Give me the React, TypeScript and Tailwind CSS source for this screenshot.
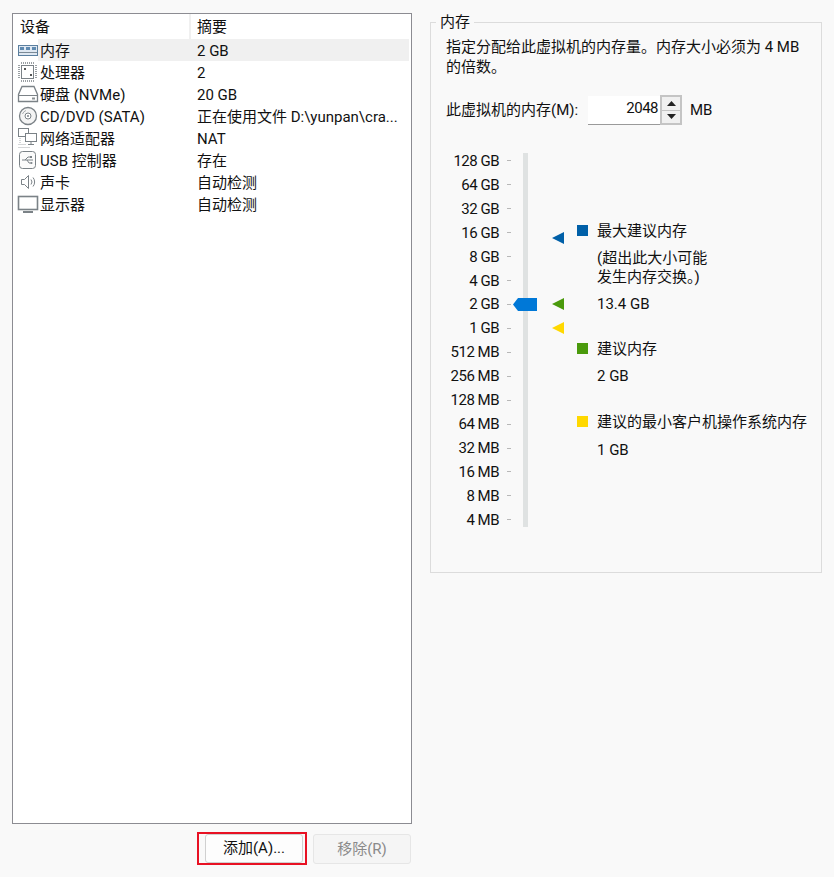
import React from 'react';

const FONT = 'Roboto, "Noto Sans CJK SC", sans-serif';

const devices = [
  { icon: 'memory', name: '内存', summary: '2 GB' },
  { icon: 'cpu', name: '处理器', summary: '2' },
  { icon: 'disk', name: '硬盘 (NVMe)', summary: '20 GB' },
  { icon: 'cd', name: 'CD/DVD (SATA)', summary: '正在使用文件 D:\\yunpan\\cra...' },
  { icon: 'net', name: '网络适配器', summary: 'NAT' },
  { icon: 'usb', name: 'USB 控制器', summary: '存在' },
  { icon: 'sound', name: '声卡', summary: '自动检测' },
  { icon: 'display', name: '显示器', summary: '自动检测' },
];

const scale = [
  '128 GB', '64 GB', '32 GB', '16 GB', '8 GB', '4 GB', '2 GB', '1 GB',
  '512 MB', '256 MB', '128 MB', '64 MB', '32 MB', '16 MB', '8 MB', '4 MB',
];

function DeviceIcon({ name }: { name: string }) {
  const c = '#7b8287';
  return (
    <svg width="22" height="22" viewBox="0 0 22 22" fill="none" className="shrink-0">
      {name === 'memory' && (
        <g>
          <rect x="1.5" y="6.5" width="19" height="10" fill="#dfe8f2" stroke="#5b7f9f" />
          <rect x="3" y="8" width="4" height="3" fill="#5f8ab0" />
          <rect x="9" y="8" width="4" height="3" fill="#5f8ab0" />
          <rect x="15" y="8" width="4" height="3" fill="#5f8ab0" />
          <path d="M2 13.5h18" stroke="#7b8a96" />
        </g>
      )}
      {name === 'cpu' && (
        <g>
          <rect x="4.5" y="4.5" width="12" height="13" fill="#fff" stroke={c} />
          <path d="M4 2h14M4 20h14M2 4v14M19 4v14" stroke="#9a9fa3" strokeDasharray="1 1" strokeWidth="2" />
          <rect x="7" y="7" width="2" height="2" fill="#555" />
          <rect x="13" y="13" width="2" height="2" fill="#555" />
        </g>
      )}
      {name === 'disk' && (
        <g>
          <path d="M5 3.5h12l3.5 8v7h-19v-7z" fill="#fff" stroke={c} strokeWidth="1.3" />
          <path d="M2 12.5h18" stroke={c} />
          <rect x="15" y="14.5" width="3" height="2" fill="#8b9194" />
        </g>
      )}
      {name === 'cd' && (
        <g>
          <circle cx="11" cy="11" r="8.5" fill="#f4f4f4" stroke={c} strokeWidth="1.3" />
          <circle cx="11" cy="11" r="3" fill="#fff" stroke={c} />
          <circle cx="11" cy="11" r="1" fill={c} />
          <path d="M5.5 9a6 6 0 0 1 3.5-3.5" stroke="#a9adb0" />
        </g>
      )}
      {name === 'net' && (
        <g>
          <rect x="1.5" y="1.5" width="10" height="8" fill="#fff" stroke={c} />
          <rect x="8.5" y="6.5" width="11" height="8" fill="#fff" stroke={c} />
          <path d="M14 14.5v3M11 17.5h6" stroke={c} />
          <path d="M1.5 17.5h8M1.5 20.5h12M3 11v6" stroke="#a8adb0" strokeDasharray="1 1" />
        </g>
      )}
      {name === 'usb' && (
        <g>
          <rect x="2.5" y="2.5" width="16" height="17" rx="3" fill="#fbfbfb" stroke={c} />
          <path d="M5 11h11M8 11l3-3h2M10 11l2 3h2" stroke={c} />
          <rect x="13" y="7" width="2" height="2" fill={c} />
          <circle cx="14.5" cy="14" r="1" fill={c} />
        </g>
      )}
      {name === 'sound' && (
        <g>
          <path d="M4.5 8.5h3l4-4v13l-4-4h-3z" fill="#fff" stroke={c} />
          <path d="M14 8.5a4 4 0 0 1 0 5M16 6.5a7 7 0 0 1 0 9" stroke={c} />
        </g>
      )}
      {name === 'display' && (
        <g>
          <rect x="1.5" y="3.5" width="19" height="13" fill="#fff" stroke={c} strokeWidth="1.6" />
          <path d="M6 19h10" stroke={c} strokeWidth="2" />
        </g>
      )}
    </svg>
  );
}

function Triangle({ color, className }: { color: string; className: string }) {
  return (
    <svg width="12" height="12" viewBox="0 0 12 12" className={`absolute left-[552px] ${className}`}>
      <polygon points="0,6 12,0 12,12" fill={color} />
    </svg>
  );
}

function Legend({ color, title, className, children }: { color: string; title: string; className?: string; children: React.ReactNode }) {
  return (
    <div className={`flex ${className ?? ''}`}>
      <div className="w-[11px] h-[11px] mt-[5px] mr-[9px] shrink-0" style={{ background: color }} />
      <div>
        <div className="leading-[22px] whitespace-nowrap">{title}</div>
        {children}
      </div>
    </div>
  );
}

export default function App() {
  return (
    <div className="relative w-[834px] h-[877px] bg-[#f9f9f9] text-[15px] text-[#111] flex overflow-hidden" style={{ fontFamily: FONT }}>
      {/* Device list */}
      <div className="w-[400px] ml-[12px] mt-[13px] flex flex-col">
        <div className="h-[811px] bg-white border border-[#8c8c92]">
          <div className="flex h-[25px] leading-[27px]">
            <div className="w-[178px] pl-[7px] border-r-2 border-[#f0f0f0]">设备</div>
            <div className="pl-[6px]">摘要</div>
          </div>
          {devices.map((d, i) => (
            <div key={d.name} className="flex h-[22px] leading-[22px] relative">
              <div className="w-[177px] flex items-center pl-[4px]">
                <DeviceIcon name={d.icon} />
                <span className={`pl-px pt-px whitespace-nowrap ${i === 0 ? 'relative z-10' : ''}`}>{d.name}</span>
              </div>
              <div className="pl-[7px] pt-px whitespace-nowrap relative z-10">{d.summary}</div>
              {i === 0 && <div className="absolute left-[25px] right-[2px] top-0 bottom-0 bg-[#f0f0f0]" />}
            </div>
          ))}
        </div>
        <div className="flex justify-end mt-[8px]">
          <div className="w-[110px] h-[33px] border-2 border-[#e81123] flex items-center mr-[6px]">
            <button className="w-[98px] h-[29px] ml-[6px] bg-[#fdfdfd] border border-[#d0d0d0] rounded-[3px]">添加(A)...</button>
          </div>
          <button className="w-[98px] h-[30px] mt-[2px] mr-px bg-[#f5f5f5] border border-[#e6e6e6] rounded-[3px] text-[#8a8a8a]">移除(R)</button>
        </div>
      </div>

      {/* Memory group */}
      <div className="relative ml-[18px] mt-[22px] w-[392px] h-[551px] border border-[#dcdcdc] px-[15px]">
        <div className="absolute left-[5px] -top-[12px] px-[4px] bg-[#f9f9f9] leading-[22px]">内存</div>
        <div className="mt-[14px] leading-[20px] whitespace-nowrap">
          指定分配给此虚拟机的内存量。内存大小必须为 4 MB<br />的倍数。
        </div>
        <div className="flex items-center mt-[18px] h-[30px]">
          <span className="w-[142px] whitespace-nowrap">此虚拟机的内存(M):</span>
          <div className="w-[72px] h-[29px] bg-white border-b border-[#9a9a9a] text-right pr-[2px] leading-[25px] tracking-[-0.5px]">2048</div>
          <div className="w-[22px] h-[30px] border-2 border-[#c4c4c4] bg-[#e8e8e8] flex flex-col">
            <div className="flex-1 flex items-center justify-center border-b border-[#c4c4c4] bg-[#f0f0f0]">
              <svg width="9" height="5" viewBox="0 0 9 5"><polygon points="4.5,0 9,5 0,5" fill="#222" /></svg>
            </div>
            <div className="flex-1 flex items-center justify-center bg-[#f0f0f0]">
              <svg width="9" height="5" viewBox="0 0 9 5"><polygon points="0,0 9,0 4.5,5" fill="#222" /></svg>
            </div>
          </div>
          <span className="ml-[8px]">MB</span>
        </div>

        <div className="flex mt-[28px]">
          {/* scale */}
          <div className="w-[53px] shrink-0 flex flex-col -mt-[4px]">
            {scale.map((s, i) => (
              <div key={i} className="h-[23.93px] flex items-center justify-end leading-[22px] whitespace-nowrap">
                <span className="tracking-[-0.5px]">{s}</span>
                <span className="w-[4px] h-px bg-[#b8b8b8] ml-[8px] -mr-[12px]" />
              </div>
            ))}
          </div>
          <div className="w-[5px] h-[374px] bg-[#dfe2e2] ml-[24px] shrink-0" />
          {/* legend */}
          <div className="ml-[49px] mt-[67px] w-[240px] shrink-0">
            <Legend color="#0060a8" title="最大建议内存">
              <div className="mt-[7px] leading-[19px]">(超出此大小可能<br />发生内存交换。)</div>
              <div className="mt-[6px] leading-[22px]">13.4 GB</div>
            </Legend>
            <Legend color="#4a9a0c" title="建议内存" className="mt-[23px]">
              <div className="mt-[5px] leading-[22px]">2 GB</div>
            </Legend>
            <Legend color="#ffd800" title="建议的最小客户机操作系统内存" className="mt-[24px]">
              <div className="mt-[6px] leading-[22px]">1 GB</div>
            </Legend>
          </div>
        </div>
      </div>

      {/* slider markers */}
      <svg width="24" height="13" viewBox="0 0 24 13" className="absolute left-[513px] top-[298px]">
        <polygon points="0,6.5 5,0 24,0 24,13 5,13" fill="#0078d7" />
      </svg>
      <Triangle color="#0060a8" className="top-[232px]" />
      <Triangle color="#4a9a0c" className="top-[298px]" />
      <Triangle color="#ffd800" className="top-[322px]" />
    </div>
  );
}
